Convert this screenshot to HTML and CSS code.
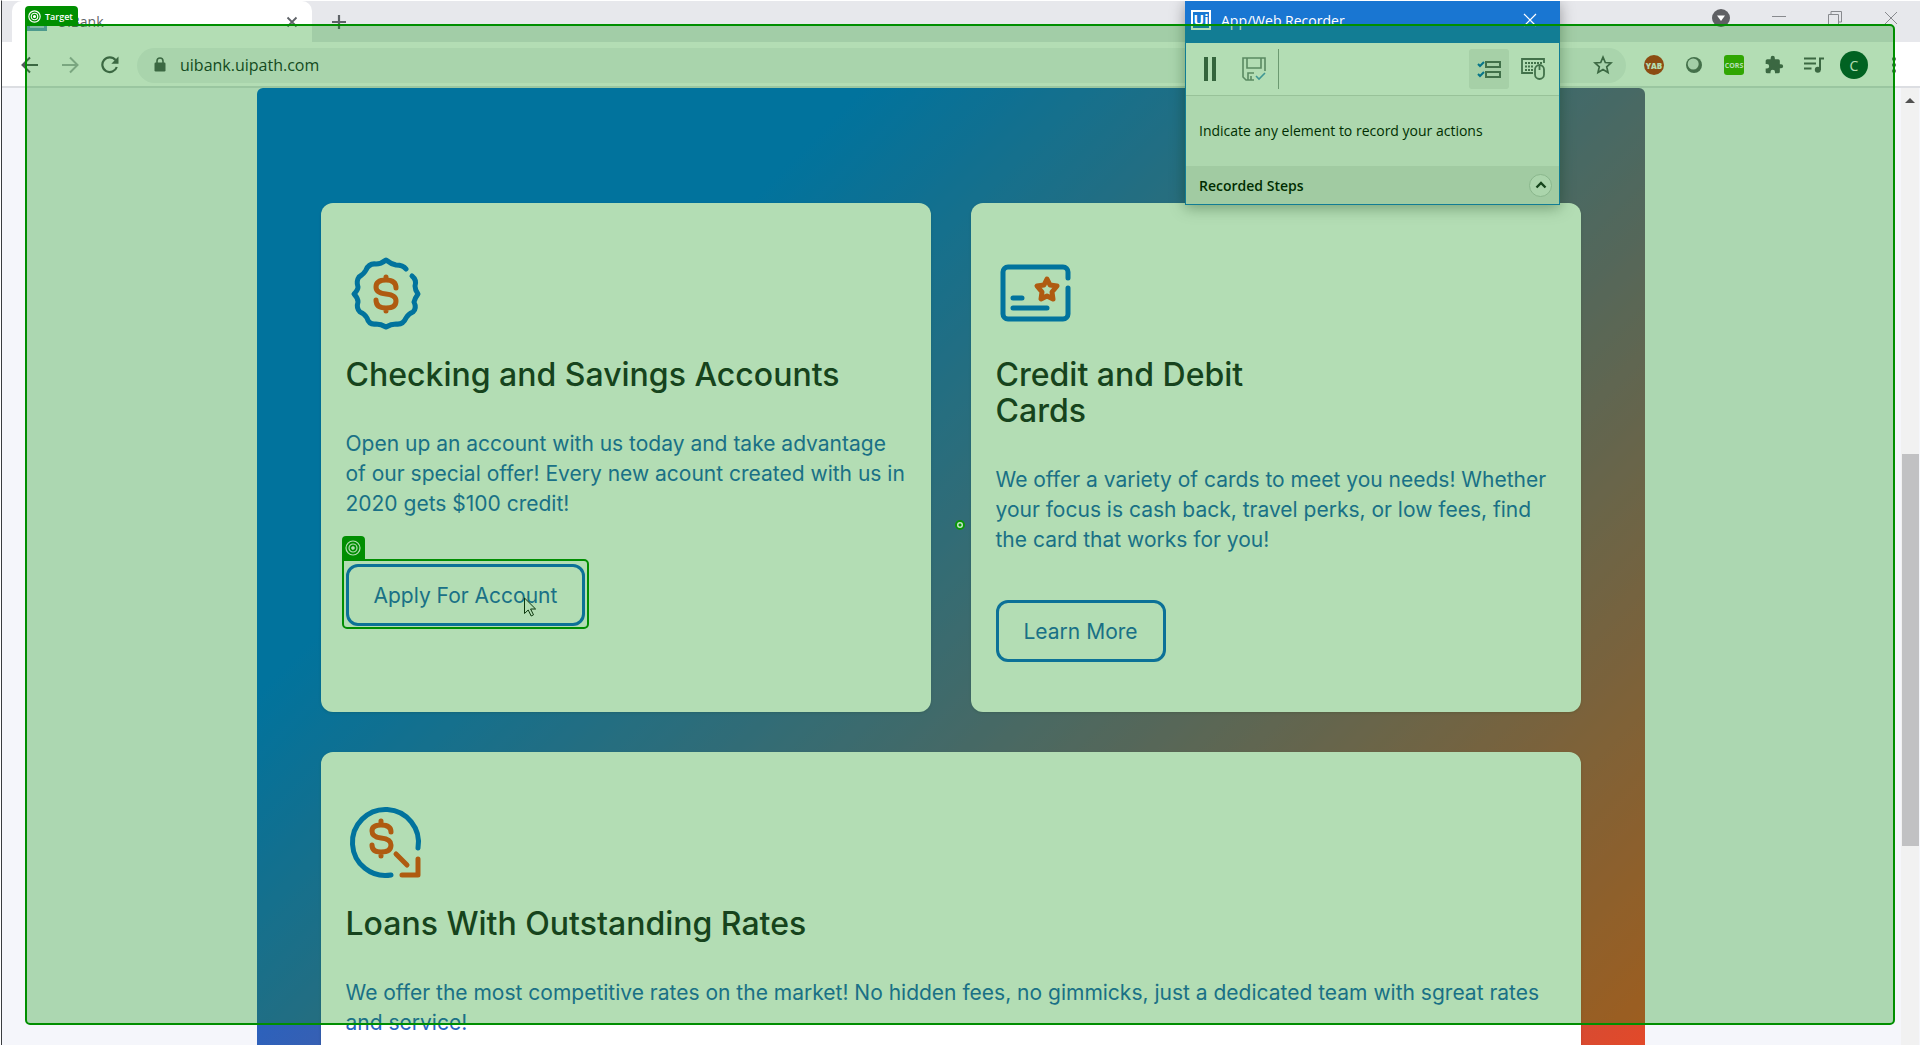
FILE: index.html
```html
<!DOCTYPE html>
<html lang="en">
<head>
<meta charset="utf-8">
<title>UiBank</title>
<link rel="stylesheet" href="styles.css">
</head>
<body>
<div class="browser">
  <header class="tabstrip">
    <div class="tab">
      <span class="favicon"></span>
      <span class="tab-title">UiBank</span>
      <button class="icon-btn tab-close" aria-label="Close tab"><svg width="12" height="12" viewBox="0 0 12 12"><path d="M1.500 1.500l9 9M10.500 1.500l-9 9" stroke="#5f6368" stroke-width="1.800"/></svg></button>
    </div>
    <button class="icon-btn new-tab" aria-label="New tab"><svg width="16" height="16" viewBox="0 0 16 16"><path d="M8 1v14M1 8h14" stroke="#5f6368" stroke-width="2.200"/></svg></button>
    <div class="window-controls">
      <button class="icon-btn" aria-label="Search tabs"><svg width="18" height="18" viewBox="0 0 18 18"><circle cx="9" cy="9" r="9" fill="#5f6064"/><path d="M5 6.500h8L9 12z" fill="#fff"/></svg></button>
      <button class="icon-btn" aria-label="Minimize"><svg width="14" height="14" viewBox="0 0 14 14"><path d="M0 5.500h14" stroke="#888a8e"/></svg></button>
      <button class="icon-btn" aria-label="Restore"><svg width="14" height="14" viewBox="0 0 14 14" fill="none" stroke="#888a8e"><path d="M.5 3.500h10v10H.5zM3 3V.5h10.500V11H11"/></svg></button>
      <button class="icon-btn" aria-label="Close"><svg width="14" height="14" viewBox="0 0 14 14"><path d="M1 1l12 12M13 1L1 13" stroke="#888a8e"/></svg></button>
    </div>
  </header>

  <nav class="toolbar">
    <button class="icon-btn" aria-label="Back"><svg width="18" height="18" viewBox="0 0 18 18" fill="none" stroke="#54585c" stroke-width="2"><path d="M17 9H2M9 1.500L1.500 9 9 16.500"/></svg></button>
    <button class="icon-btn" aria-label="Forward"><svg width="18" height="18" viewBox="0 0 18 18" fill="none" stroke="#aeb1b5" stroke-width="2"><path d="M1 9h15M9 1.500L16.500 9 9 16.500"/></svg></button>
    <button class="icon-btn" aria-label="Reload"><svg width="18" height="18" viewBox="0 0 18 18"><path d="M15.800 11A7.400 7.400 0 1 1 14.500 4" fill="none" stroke="#54585c" stroke-width="2.200"/><path d="M17.500 .5v7.200h-7.200z" fill="#54585c"/></svg></button>
    <div class="omnibox">
      <svg width="12" height="16" viewBox="0 0 12 16"><rect x=".5" y="5.500" width="11" height="9" rx="1.200" fill="#54585c"/><path d="M3 6V4a3 3 0 0 1 6 0v2" fill="none" stroke="#54585c" stroke-width="1.600"/></svg>
      <input class="address" type="text" value="uibank.uipath.com" aria-label="Address">
      <button class="icon-btn" aria-label="Bookmark"><svg width="20" height="20" viewBox="0 0 20 20"><path d="M10 2.200l2.300 5.300 5.700.5-4.300 3.800 1.300 5.600-5-3-5 3 1.300-5.600L2 8l5.700-.5z" fill="none" stroke="#54585c" stroke-width="1.700"/></svg></button>
    </div>
    <div class="extensions">
      <button class="icon-btn yab">YAB</button>
      <button class="icon-btn" aria-label="Extension"><svg width="18" height="18" viewBox="0 0 18 18"><circle cx="9" cy="9" r="8" fill="#606468"/><circle cx="8.200" cy="8" r="5.500" fill="#e9eaec"/></svg></button>
      <button class="icon-btn cors">CORS</button>
      <button class="icon-btn" aria-label="Extensions"><svg width="20" height="20" viewBox="0 0 24 24"><path d="M20.500 11H19V7a2 2 0 0 0-2-2h-4V3.500a2.500 2.500 0 0 0-5 0V5H4a2 2 0 0 0-2 2v3.800h1.500a2.700 2.700 0 0 1 0 5.400H2V20a2 2 0 0 0 2 2h3.800v-1.500a2.700 2.700 0 0 1 5.400 0V22H17a2 2 0 0 0 2-2v-4h1.500a2.500 2.500 0 0 0 0-5z" fill="#54585c"/></svg></button>
      <button class="icon-btn" aria-label="Media"><svg width="20" height="18" viewBox="0 0 20 18"><path d="M0 2.500h12M0 7.500h12M0 12.500h7.500M16 14V2.500h4" fill="none" stroke="#54585c" stroke-width="2"/><circle cx="13.800" cy="13.800" r="3" fill="#54585c"/></svg></button>
      <button class="icon-btn avatar">C</button>
      <button class="icon-btn" aria-label="Menu"><svg width="4" height="16" viewBox="0 0 4 16" fill="#54585c"><circle cx="2" cy="2" r="2"/><circle cx="2" cy="8" r="2"/><circle cx="2" cy="14" r="2"/></svg></button>
    </div>
  </nav>

  <div class="viewport">
    <main class="page">
      <section class="products">
        <article class="card">
          <svg class="card-icon" viewBox="0 1 80 80" fill="none" stroke-width="5" stroke-linecap="round" stroke-linejoin="round"><path stroke="#0067df" d="M60 17Q57 13 50 13Q45 12 40 8Q35 12 30 12Q23 11 20 18Q18 22 13 25Q10 29 12 35Q12 38 8 42Q12 46 12 50Q10 56 14 60Q19 62 21 66Q23 73 30 72Q35 72 40 75Q45 72 50 72Q57 73 60 66Q62 62 67 60Q71 56 68 50Q69 46 72 42Q69 38 69 34Q71 28 66 24"/><path stroke="#fa4616" d="M50 36Q50 28 40 28Q30 28 30 35Q30 41 40 42Q50 43 50 49Q50 56 40 56Q30 56 30 48M40 25v3M40 56v3"/></svg>
          <h2>Checking and Savings Accounts</h2>
          <p>Open up an account with us today and take advantage<br>of our special offer! Every new acount created with us in<br>2020 gets $100 credit!</p>
          <div class="action">
            <button class="cta">Apply For Account</button>
            <div class="pick-frame"></div>
            <span class="pick-tag"><svg width="16" height="16" viewBox="0 0 16 16" fill="none" stroke="#fff" stroke-width="1.200"><circle cx="8" cy="8" r="7"/><circle cx="8" cy="8" r="4"/><circle cx="8" cy="8" r="1.200" fill="#fff"/></svg></span>
            <svg class="cursor" width="13" height="20" viewBox="0 0 13 20"><path d="M.5 1v15.500l3.700-3.500 3 6 2.300-1.200-2.900-5.800h5z" fill="#fff" stroke="#111"/></svg>
          </div>
        </article>
        <article class="card">
          <svg class="card-icon" viewBox="0 1 80 80" fill="none" stroke-width="5" stroke-linecap="round" stroke-linejoin="round"><path stroke="#0067df" d="M72 26V20a5 5 0 0 0-5-5H12a5 5 0 0 0-5 5v42a5 5 0 0 0 5 5h55a5 5 0 0 0 5-5V36M17 46h9M17 56h34"/><path stroke="#fa4616" d="M51 27l3 6 7 1-5 6 1 7-6-3-6 3 1-7-5-6 7-1z"/></svg>
          <h2>Credit and Debit<br>Cards</h2>
          <p>We offer a variety of cards to meet you needs! Whether<br>your focus is cash back, travel perks, or low fees, find<br>the card that works for you!</p>
          <div class="action"><button class="cta">Learn More</button></div>
        </article>
        <article class="card wide">
          <svg class="card-icon" viewBox="0 1 80 80" fill="none" stroke-width="5" stroke-linecap="round" stroke-linejoin="round"><path stroke="#0067df" d="M72 47A33 33 0 1 0 45 74"/><path stroke="#fa4616" d="M45 31Q45 24 35 24Q26 24 26 30Q26 36 35 37Q45 38 45 44Q45 51 35 51Q26 51 26 44M35 20v4M35 51v4M50 53l11 11M72 58v16H56"/></svg>
          <h2>Loans With Outstanding Rates</h2>
          <p>We offer the most competitive rates on the market! No hidden fees, no gimmicks, just a dedicated team with sgreat rates<br>and service!</p>
        </article>
      </section>
    </main>
    <div class="scrollbar"><span class="scroll-arrow"></span><span class="scroll-thumb"></span></div>
  </div>

  <aside class="recorder">
    <div class="rec-title">
      <span class="rec-logo">Ui</span>
      <span>App/Web Recorder</span>
      <button class="icon-btn rec-close" aria-label="Close recorder"><svg width="14" height="14" viewBox="0 0 14 14"><path d="M1 1l12 12M13 1L1 13" stroke="#fff" stroke-width="1.200"/></svg></button>
    </div>
    <div class="rec-tools">
      <button class="icon-btn" aria-label="Pause"><svg width="12" height="24" viewBox="0 0 12 24"><path d="M0 0h4v24H0zM8 0h4v24H8z" fill="#4a5254"/></svg></button>
      <button class="icon-btn" aria-label="Save"><svg width="24" height="24" viewBox="0 0 24 24" fill="none" stroke="#81898a" stroke-width="1.600"><path d="M23 14V1H1v19l3 3h8M5 1v10h14V1M6 23v-7h6M9 19v4"/><path d="M14 19l3 3 6-6" stroke="#5b9ad0"/></svg></button>
      <span class="rec-divider"></span>
      <button class="icon-btn rec-steps" aria-label="Show steps"><svg width="24" height="18" viewBox="0 0 24 18" fill="none" stroke="#5d6568" stroke-width="2"><path d="M9 2h14v5H9zM9 12h14v5H9z"/><path d="M1 4l2 2 4-4M1 14l2 2 4-4" stroke="#0a6ac0"/></svg></button>
      <button class="icon-btn" aria-label="Input mode"><svg width="24" height="22" viewBox="0 0 24 22" fill="none" stroke="#5d6568" stroke-width="1.800"><path d="M23 5V1H1v14h11"/><path d="M4 5h17M4 8.500h9M4 12h2M7 12h5" stroke-dasharray="2 1"/><rect x="14" y="7" width="9" height="14" rx="4.500"/><path d="M18.500 7v5"/></svg></button>
    </div>
    <p class="rec-message">Indicate any element to record your actions</p>
    <div class="rec-steps-bar">
      <span>Recorded Steps</span>
      <button class="icon-btn rec-expand" aria-label="Expand"><svg width="12" height="8" viewBox="0 0 12 8"><path d="M1.500 6.500L6 2l4.500 4.500" fill="none" stroke="#1e2626" stroke-width="2.400"/></svg></button>
    </div>
  </aside>

  <div class="target-frame"><span class="target-handle"></span></div>
  <div class="target-tag"><svg width="13" height="13" viewBox="0 0 16 16" fill="none" stroke="#fff" stroke-width="1.400"><circle cx="8" cy="8" r="7"/><circle cx="8" cy="8" r="4"/><circle cx="8" cy="8" r="1.200" fill="#fff"/></svg>Target</div>
</div>
</body>
</html>
```
FILE: styles.css
```css
* { box-sizing: border-box; }

body {
  margin: 0;
  background: #fff;
  font-family: "Open Sans", "Noto Sans", sans-serif;
}

.icon-btn {
  display: inline-flex;
  align-items: center;
  justify-content: center;
  padding: 0;
  border: 0;
  background: none;
  font-family: inherit;
}

.browser {
  position: relative;
  display: flex;
  flex-direction: column;
  height: 100vh;
  overflow: hidden;
  border-top: 1px solid #fff;
  margin-left: 1px;
  border-left: 1px solid #3a3d40;
}

/* Tab strip */
.tabstrip {
  flex: none;
  display: flex;
  align-items: center;
  height: 41px;
  padding: 0 22px 8px 10px;
  background: #e7e8ec;
}

.tab {
  display: flex;
  align-items: center;
  gap: 10px;
  width: 300px;
  height: 41px;
  margin-bottom: -8px;
  padding: 0 14px 0 15px;
  border-radius: 10px 10px 0 0;
  background: #fff;
}

.favicon {
  width: 20px;
  height: 18px;
  border: 3px solid #6da0c8;
  background: #b8d0e4;
}

.tab-title {
  flex: 1;
  font-size: 14px;
  color: #5f6368;
}

.new-tab { margin-left: 19px; margin-top: 8px; }

.window-controls {
  display: flex;
  align-items: center;
  gap: 42px;
  margin-left: auto;
}

/* Address bar row */
.toolbar {
  flex: none;
  display: flex;
  align-items: center;
  gap: 22px;
  height: 46px;
  padding: 2px 16px 0 19px;
  border-bottom: 2px solid #dcdee2;
}

.omnibox {
  flex: 1;
  display: flex;
  align-items: center;
  gap: 14px;
  height: 35px;
  padding: 0 13px 0 17px;
  margin-left: -4px;
  border-radius: 18px;
  background: #f1f3f4;
}

.address {
  flex: 1;
  padding: 0;
  border: 0;
  background: none;
  font: 16px/24px "Open Sans", "Noto Sans", sans-serif;
  color: #202c2c;
}

.extensions {
  display: flex;
  align-items: center;
  gap: 20px;
  margin-left: -4px;
}

.extensions .icon-btn { width: 20px; height: 20px; }

.extensions .yab {
  border-radius: 50%;
  background: #c83018;
  color: #fff;
  font-size: 8px;
  font-weight: 800;
}

.extensions .cors {
  border-radius: 3px;
  background: #44b000;
  color: #fff;
  font-size: 7px;
  font-weight: 700;
}

.extensions .avatar {
  width: 28px;
  height: 28px;
  margin: 0 -4px;
  border-radius: 50%;
  background: #00502e;
  color: #fff;
  font-size: 14px;
}

/* Page */
.viewport {
  flex: 1;
  min-height: 0;
  display: flex;
  overflow: hidden;
  background: #f5f6fb;
}

.page {
  flex: 1;
  overflow: hidden;
  padding-right: 2px;
}

.products {
  display: grid;
  grid-template-columns: 1fr 1fr;
  gap: 40px;
  max-width: 1388px;
  min-height: 100%;
  margin: 0 auto;
  padding: 115px 64px;
  border-radius: 6px 6px 0 0;
  background: linear-gradient(135deg, #0067df 24%, #fa4616 101%);
}

.card {
  padding: 50px 25px;
  border-radius: 12px;
  background: #fff;
  box-shadow: 0 1px 3px rgba(0, 0, 0, 0.15);
  font-family: Inter, "Open Sans", sans-serif;
}

.wide { grid-column: 1 / -1; }

.card-icon {
  display: block;
  width: 80px;
  height: 80px;
}

.card h2 {
  margin: 24px 0 36px;
  font-size: 32px;
  font-weight: 500;
  line-height: 36px;
  color: #202328;
}

.card p {
  margin: 0;
  font-size: 21px;
  line-height: 30px;
  color: #2664bd;
  white-space: nowrap;
}

.action {
  position: relative;
  width: max-content;
  margin-top: 45px;
}

.cta {
  display: block;
  height: 62px;
  padding: 0 25px;
  border: 3px solid #1065d6;
  border-radius: 12px;
  background: #fff;
  font-family: inherit;
  font-size: 21px;
  color: #2664bd;
}

/* Picked element */
.pick-frame {
  position: absolute;
  inset: -5px -4px -3px;
  border: 2px solid #008f00;
  border-radius: 0 5px 5px 5px;
}

.pick-tag {
  position: absolute;
  left: -4px;
  top: -28px;
  display: flex;
  align-items: center;
  justify-content: center;
  width: 23px;
  height: 24px;
  border-radius: 4px 4px 0 0;
  background: #008f00;
}

.cursor {
  position: absolute;
  left: 178px;
  top: 33px;
}

.scrollbar {
  display: flex;
  flex-direction: column;
  align-items: center;
  width: 18px;
  margin-right: 1px;
  background: #f1f1f1;
}

.scroll-arrow {
  margin: 10px 0 351px;
  border: 5px solid transparent;
  border-top: 0;
  border-bottom-color: #505050;
}

.scroll-thumb {
  width: 17px;
  height: 392px;
  background: #c1c1c3;
}

/* Recorder window */
.recorder {
  position: absolute;
  top: 0;
  right: 360px;
  width: 375px;
  border: 1px solid #1976d2;
  border-top: 0;
  background: #f6f6f6;
  box-shadow: 0 3px 14px rgba(0, 0, 0, 0.35);
  color: #000;
}

.rec-title {
  display: flex;
  align-items: center;
  gap: 10px;
  height: 42px;
  padding: 0 22px 4px 5px;
  background: #1976d2;
  color: #fff;
  font-size: 14px;
}

.rec-logo {
  width: 20px;
  height: 20px;
  border: 2px solid #fff;
  font-size: 14px;
  font-weight: 700;
  line-height: 16px;
  text-align: center;
}

.rec-close { margin-left: auto; }

.rec-tools {
  display: flex;
  align-items: center;
  height: 53px;
  padding: 0 14px 0 18px;
  gap: 26px;
  border-bottom: 1px solid #d8d8d8;
  background: #fff;
}

.rec-divider {
  width: 1px;
  height: 40px;
  margin: 0 auto 0 -14px;
  background: #9aa0a0;
}

.rec-steps {
  width: 40px;
  height: 40px;
  margin-right: -14px;
  border-radius: 3px;
  background: #ececec;
}

.rec-message {
  margin: 0;
  padding: 23px 13px;
  font-size: 14px;
  line-height: 24px;
}

.rec-steps-bar {
  display: flex;
  align-items: center;
  justify-content: space-between;
  height: 38px;
  padding: 0 7px 0 13px;
  background: #e6e6e6;
  font-size: 14px;
  font-weight: 600;
}

.rec-expand {
  width: 23px;
  height: 23px;
  border: 1px solid #c4c8c6;
  border-radius: 50%;
  background: #f4f4f4;
}

/* Target highlight */
.target-frame {
  position: absolute;
  inset: 23px 25px 20px 23px;
  display: flex;
  align-items: center;
  justify-content: center;
  border: 2px solid #008f00;
  border-radius: 0 5px 5px 5px;
  background: rgba(2, 141, 8, 0.3);
}

.target-handle {
  width: 10px;
  height: 10px;
  border: 2px solid #0a960a;
  border-radius: 50%;
  background: radial-gradient(circle, #0a960a 1px, #c8e6c8 2px);
}

.target-tag {
  position: absolute;
  left: 23px;
  top: 5px;
  display: flex;
  align-items: center;
  gap: 4px;
  height: 20px;
  padding: 0 5px 0 3px;
  border-radius: 4px 4px 0 0;
  background: #008f00;
  color: #fff;
  font-size: 9px;
  font-weight: 600;
}
```
